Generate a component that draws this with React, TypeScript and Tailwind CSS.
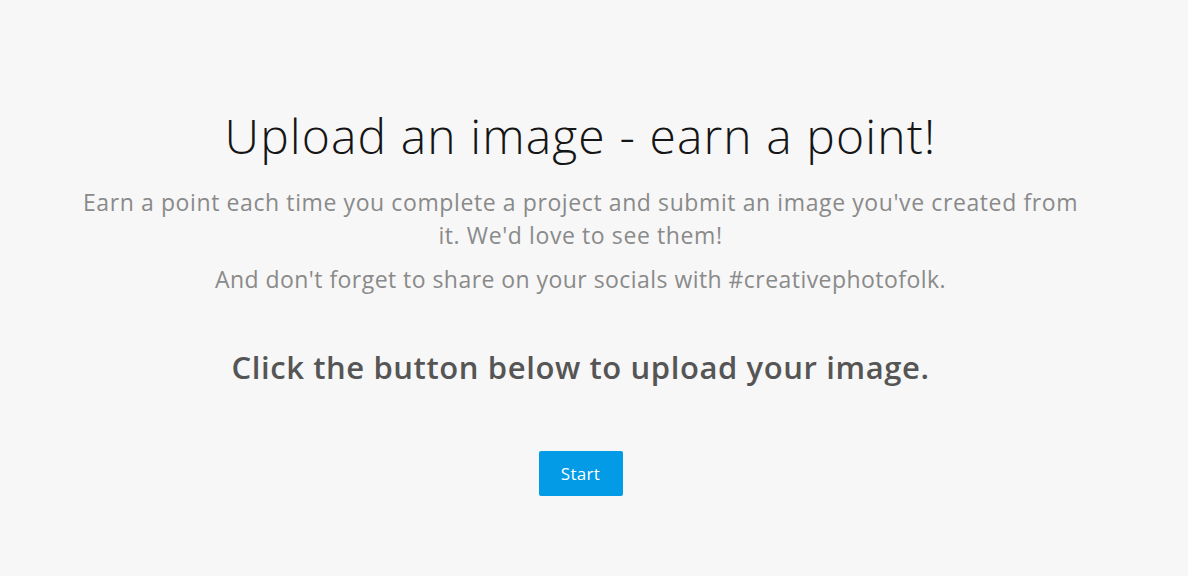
export default function App() {
  return (
    <div className="min-h-screen w-full bg-[#f7f7f7] flex justify-center pr-[27px]" style={{ fontFamily: '"Open Sans", sans-serif' }}>
      <div className="w-[1010px] flex flex-col items-center text-center pt-[107px]">
        <h1 className="text-[48px] leading-[58px] font-light tracking-[1.1px] text-[#151515]">
          Upload an image - earn a point!
        </h1>
        <p className="mt-[21px] text-[23px] leading-[33px] tracking-[0.6px] text-[#8a8a8a]">
          Earn a point each time you complete a project and submit an image you've created from it. We'd love to see them!
        </p>
        <p className="mt-[11px] text-[23px] leading-[33px] tracking-[0.45px] text-[#8a8a8a]">
          And don't forget to share on your socials with #creativephotofolk.
        </p>
        <h3 className="mt-[51px] text-[31px] leading-[40px] font-semibold tracking-[0.6px] text-[#555555]">
          Click the button below to upload your image.
        </h3>
        <button className="mt-[64px] h-[45px] w-[84px] rounded-[2px] bg-[#039be5] text-white text-[17px] tracking-[0.3px]">
          Start
        </button>
      </div>
    </div>
  )
}
